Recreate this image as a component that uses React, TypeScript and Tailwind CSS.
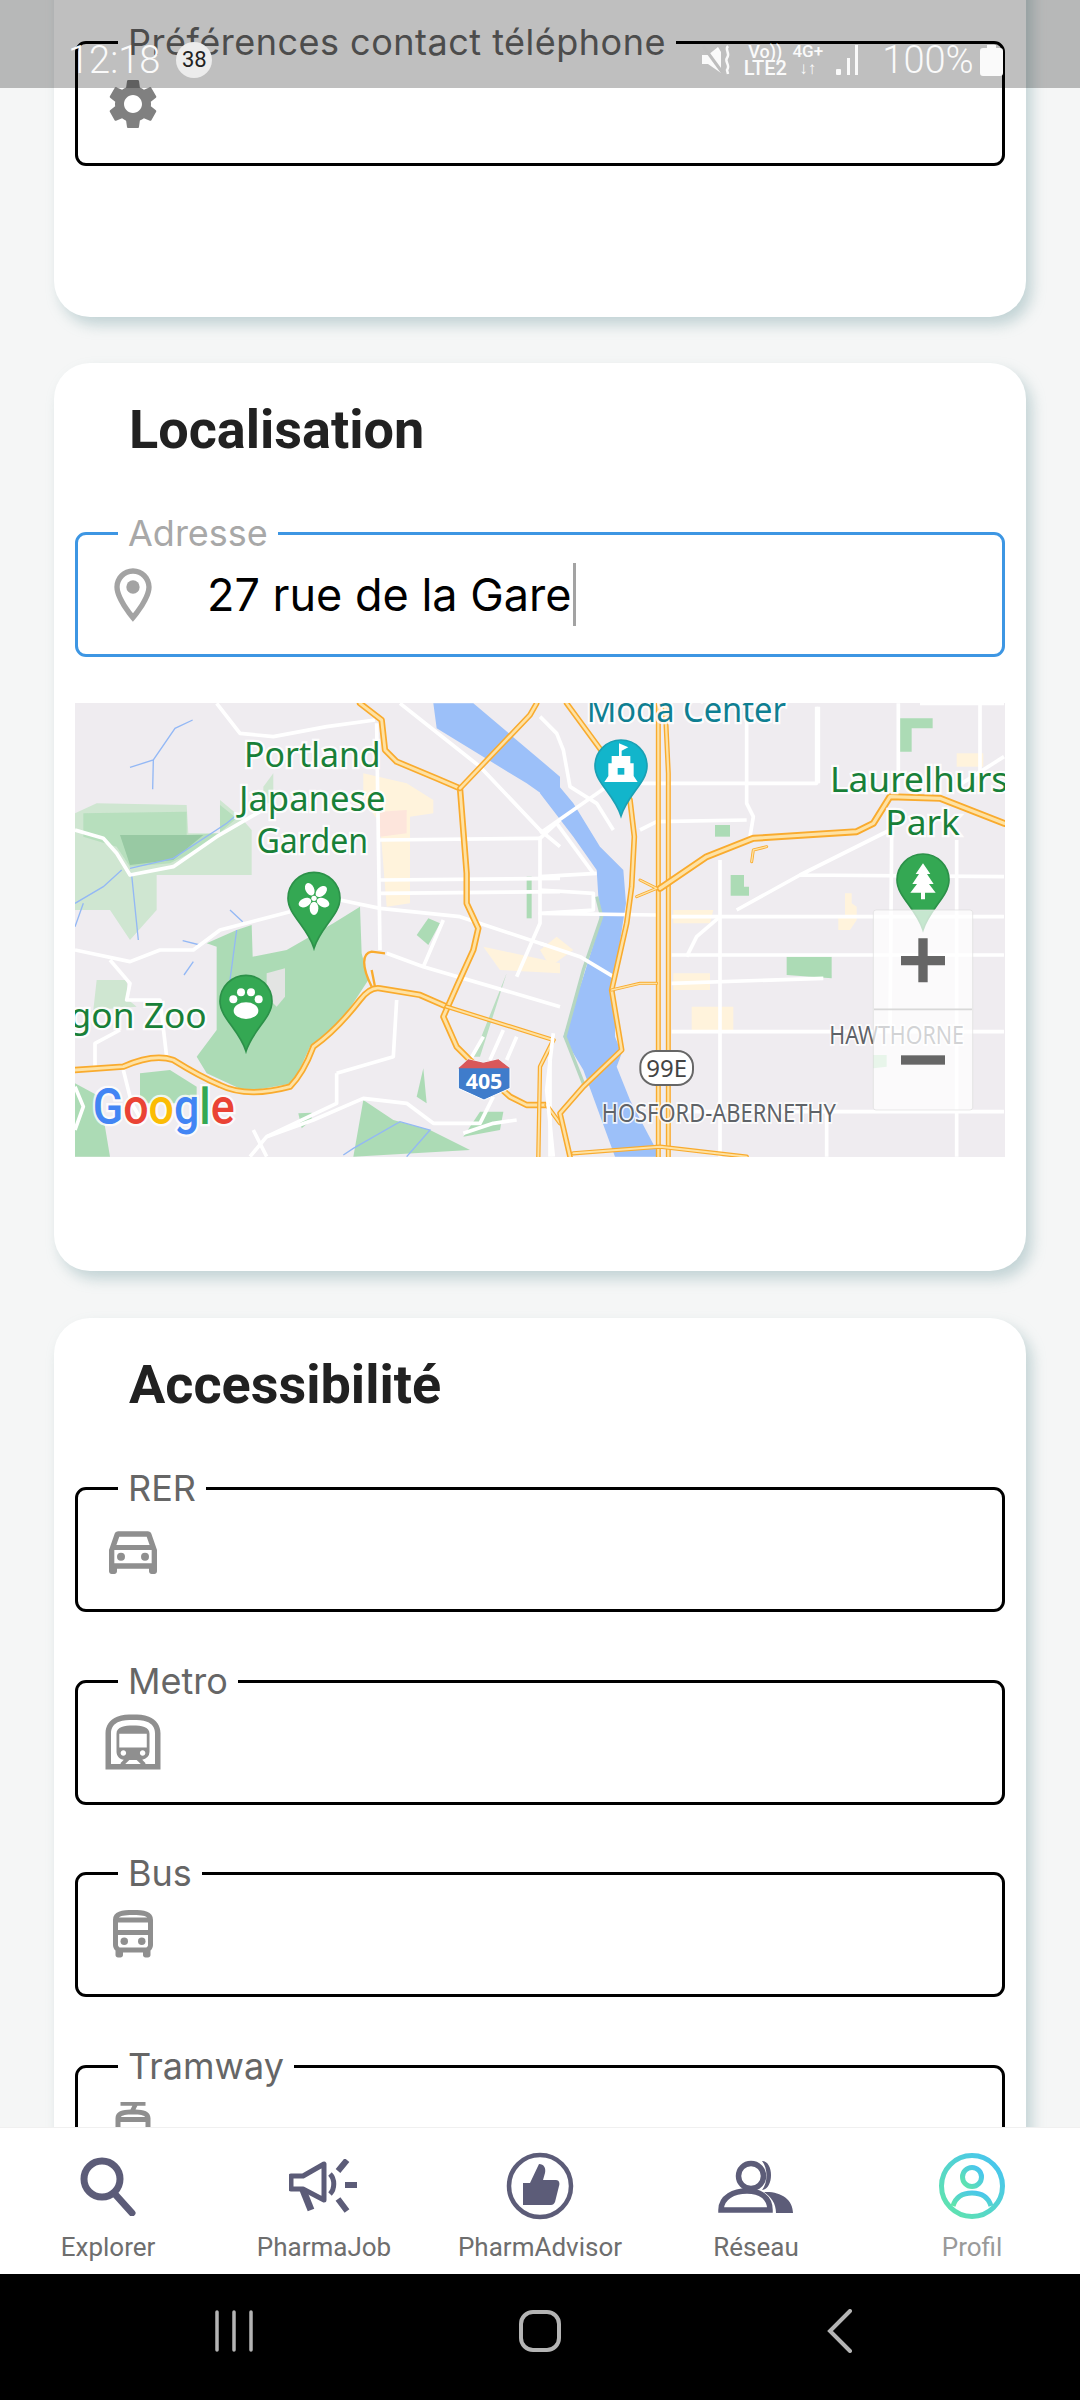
import React from "react";
import {
  MdSettings,
  MdOutlineLocationOn,
  MdOutlineDirectionsCar,
  MdOutlineSubway,
  MdOutlineDirectionsBus,
  MdOutlineTram,
} from "react-icons/md";

const NOTO = '"Noto Sans", sans-serif';

function Pin({ x, y, fill, edge, children }: { x: number; y: number; fill: string; edge: string; children?: React.ReactNode }) {
  return (
    <g transform={`translate(${x},${y})`}>
      <path d="M-78 0A78 78 0 1 1 78 0C78 50 20 85 0 150C-20 85 -78 50 -78 0Z" fill={fill} stroke={edge} strokeWidth="5" />
      {children}
    </g>
  );
}

function MapLabel({ x, y, size, fill, anchor = "middle", len, children }: { x: number; y: number; size: number; fill: string; anchor?: "middle" | "start" | "end"; len?: number; children: React.ReactNode }) {
  return (
    <text x={x} y={y} fontSize={size} fill={fill} textAnchor={anchor} fontFamily={NOTO} stroke="#ffffff" strokeOpacity="0.85" strokeWidth={size * 0.13} paintOrder="stroke" textLength={len} lengthAdjust={len ? "spacingAndGlyphs" : undefined}>
      {children}
    </text>
  );
}

function Highway({ d, w = 17 }: { d: string; w?: number }) {
  return (
    <g fill="none" strokeLinejoin="round" strokeLinecap="round">
      <path d={d} stroke="#f9ab2e" strokeWidth={w} />
      <path d={d} stroke="#fee2a4" strokeWidth={w * 0.45} />
    </g>
  );
}

function MapDrawing() {
  const lg = "#cfe6d1";
  const mg = "#acdbb5";
  const roads3 = [
    "M45 420L130 445L170 490L210 555L340 530L470 440L600 365",
    "M470 40L540 130L640 140L800 110L945 90",
    "M45 780L210 815L300 780L400 780L480 720L690 665",
    "M840 630L960 655L1200 680L1500 780",
    "M950 100L960 780",
    "M960 450L1440 445M960 570L1500 565M960 610L1500 605",
    "M980 790L1090 830L1500 950",
    "M1150 690L1090 830M1440 440L1440 700L1370 860",
    "M150 810L210 880L200 930L300 930L320 1100",
    "M105 1130L105 1060L180 1020",
    "M45 1190L70 1250L45 1320",
    "M830 1150L1000 1100L1010 930M830 1150L830 1240L620 1340L570 1400",
    "M620 1340L760 1290L910 1225L1040 1240L1120 1300L1260 1300L1300 1220",
    "M1210 1330L1300 1300L1370 1290",
    "M1020 40L1260 230L1440 420L1500 470",
    "M1440 445L1500 390",
    "M190 1140L215 1240L250 1300M580 1320L620 1400",
    "M1270 1040L1230 1110M1330 1020L1290 1110M1370 1040L1340 1110",
    "M1470 1100L1470 1400",
  ];
  const roads4 = [
    "M0 80L50 130L70 180L90 290L170 340L220 420",
    "M0 430L100 360L200 290",
    "M50 400L160 550M0 560L170 550",
    "M0 600L160 610L160 660L0 670L350 675",
    "M0 760L120 800L220 860",
    "M300 420L350 395L620 390",
    "M300 280L830 280L830 50",
    "M620 50L620 340L640 380L630 440",
    "M540 510L540 1400",
    "M395 680L1392 680M395 795L1392 795M395 880L850 865M395 1025L1392 1025M395 1265L1392 1265",
    "M835 50L835 280M1075 40L1075 300M1320 40L1320 300",
    "M590 660L780 555L1050 420M780 555L1392 560",
    "M1055 440L1050 1020M1250 450L1250 1400",
    "M860 1265L860 1400M1140 40L1392 40",
    "M1250 290L1392 200",
    "M440 800L470 740L540 680",
    "M40 1030L20 1200L40 1400",
  ];
  return (
    <svg viewBox="0 0 930 454" className="block h-[454px] w-[930px]">
      <rect width="930" height="454" fill="#efecf0" />
      {/* left half: drawn in the coordinates of the left crop */}
      <g transform="translate(-15,-13) scale(0.33333)">
        <path d="M45 370L110 340L380 345L385 430L480 430L480 330L540 380L575 420L575 555L290 555L290 660L210 750L150 660L45 660Z" fill={lg} />
        <path d="M70 370L380 365L380 435L480 430L480 345L530 385L430 470L330 520L210 530L170 470L70 440Z" fill={mg} opacity="0.7" />
        <path d="M180 435L430 435L340 510L210 525Z" fill="#98c9a3" />
        <path d="M610 290L640 250L640 290L640 340L610 340Z" fill={lg} />
        <path d="M110 870L200 870L205 930L230 950L100 960Z" fill={lg} />
        <path d="M470 770L440 760L530 720L575 705L578 800L680 780L820 700L900 650L905 790L925 870L840 1000L750 1070L700 1180L560 1205L440 1150L410 1100L470 1020Z" fill={mg} />
        <path d="M620 850L675 835L675 920L650 950L620 920Z" fill="#e3e4e3" />
        <path d="M240 1150L330 1140L410 1190L410 1240L240 1240Z" fill={mg} />
        <path d="M45 1180L120 1220L150 1400L45 1400Z" fill={mg} />
        <path d="M910 1230L1000 1290L1110 1320L1230 1380L880 1400Z" fill={mg} />
        <path d="M1070 1220L1090 1135L1100 1240Z" fill={mg} />
        <path d="M715 1270L755 1268L755 1290L725 1315Z" fill={mg} />
        <path d="M1260 1265L1330 1265L1320 1320L1210 1340Z" fill={mg} />
        <path d="M1070 735L1105 685L1140 700L1105 765Z" fill={mg} />
        <path d="M1400 560H1415V685H1400Z" fill={mg} />
        <path d="M1240 1100L1320 900L1340 850L1260 1100Z" fill={mg} opacity="0.8" />
        <path d="M910 250L1040 280L1120 330L1120 370L1050 380L1050 640L980 650L960 400L910 330Z" fill="#fff3dc" />
        <path d="M960 365L1040 360L1040 430L960 440Z" fill="#fde5dc" />
        <path d="M1270 770L1500 820L1500 850L1320 840Z" fill="#fff3dc" />
        <path d="M1120 40L1240 40L1500 260L1500 350L1400 280L1130 115Z" fill="#9cc0f9" />
        <path d="M210 232L280 210L345 115L398 90M280 210L278 298M45 640L130 590L185 540M215 555L235 750M210 535L340 505L500 400L530 375M45 710L70 640M510 660L548 695M530 720L510 870M368 752L420 765M400 815L372 855" fill="none" stroke="#93b8f5" strokeWidth="4" />
        <path d="M850 1395L880 1375L1020 1295L1110 1320L1040 1400" fill="none" stroke="#93b8f5" strokeWidth="4" />
        <g fill="none" stroke="#ffffff" strokeWidth="11" strokeLinejoin="round">
          {roads3.map((d) => (
            <path key={d} d={d} />
          ))}
        </g>
        <Highway d="M45 1140L190 1130Q280 1090 340 1110Q420 1160 480 1185Q560 1225 690 1190Q730 1150 760 1070Q830 1020 900 930Q930 890 960 895L1080 915L1160 950" w={19} />
        <Highway d="M900 40L965 90L975 180L1010 215L1130 265L1200 295L1220 550L1220 640L1255 715L1240 780L1190 890L1150 980L1190 1070L1250 1130L1350 1220L1400 1245L1460 1245" w={19} />
        <Highway d="M1200 295L1410 75L1430 40" w={17} />
        <Highway d="M1160 950L1480 1050" w={13} />
        <Highway d="M1480 1050L1440 1130L1435 1400M1460 1245L1500 1300" w={13} />
        <path d="M935 890C905 830 905 790 935 785L975 790M935 840L945 890" fill="none" stroke="#f9ab2e" strokeWidth="7" />
        <path d="M1195 1135L1225 1108L1270 1118L1315 1108L1350 1135V1195L1272 1230L1195 1195Z" fill="#3f7ccb" stroke="#ffffff" strokeWidth="3" />
        <path d="M1195 1135L1225 1108L1270 1118L1315 1108L1350 1135Z" fill="#d9585a" />
        <text x="1272" y="1198" fontSize="64" fontWeight="700" fill="#ffffff" textAnchor="middle" fontFamily={NOTO}>405</text>
        <MapLabel x={757} y={232} size={106} fill="#188038" len={410}>Portland</MapLabel>
        <MapLabel x={757} y={362} size={106} fill="#188038" len={440}>Japanese</MapLabel>
        <MapLabel x={757} y={488} size={106} fill="#188038" len={335}>Garden</MapLabel>
        <MapLabel x={440} y={1015} size={106} fill="#188038" anchor="end">Oregon Zoo</MapLabel>
        <Pin x={762} y={625} fill="#34a853" edge="#2c9149">
          <circle r="8" fill="#ffffff" />
          <ellipse cx="0" cy="-30" rx="13" ry="20" fill="#ffffff" transform="rotate(-25)" />
          <ellipse cx="0" cy="-30" rx="13" ry="20" fill="#ffffff" transform="rotate(47)" />
          <ellipse cx="0" cy="-30" rx="13" ry="20" fill="#ffffff" transform="rotate(115)" />
          <ellipse cx="0" cy="-30" rx="13" ry="20" fill="#ffffff" transform="rotate(180)" />
          <ellipse cx="0" cy="-30" rx="13" ry="20" fill="#ffffff" transform="rotate(245)" />
        </Pin>
        <Pin x={558} y={934} fill="#34a853" edge="#2c9149">
          <ellipse cx="0" cy="28" rx="37" ry="25" fill="#ffffff" />
          <circle cx="-15" cy="-27" r="12" fill="#ffffff" />
          <circle cx="15" cy="-27" r="12" fill="#ffffff" />
          <circle cx="-38" cy="-6" r="12" fill="#ffffff" />
          <circle cx="38" cy="-6" r="12" fill="#ffffff" />
        </Pin>
        <g>
          <text y="1302" fontSize="150" fontWeight="500" fontFamily='"Roboto", sans-serif' stroke="#ffffff" strokeOpacity="0.8" strokeWidth="14" paintOrder="stroke" x="98" textLength="426" lengthAdjust="spacingAndGlyphs">
            <tspan fill="#4285f4">G</tspan>
            <tspan fill="#ea4335">o</tspan>
            <tspan fill="#fbbc05">o</tspan>
            <tspan fill="#4285f4">g</tspan>
            <tspan fill="#34a853">l</tspan>
            <tspan fill="#ea4335">e</tspan>
          </text>
        </g>
      </g>
      {/* right half: drawn in the coordinates of the right crop */}
      <g transform="translate(465,-13) scale(0.33333)">
        <path d="M1078 85H1178V115H1115V185H1078Z" fill={mg} />
        <path d="M525 405H570V440H525Z" fill={mg} />
        <path d="M572 555H612V590H627V617H572Z" fill={mg} />
        <path d="M740 800H875V865L740 855Z" fill={mg} />
        <path d="M1000 1095H1040V1130L1000 1135Z" fill={mg} />
        <path d="M895 680L915 680L915 610L935 610L935 640L950 650V690L930 720H895Z" fill="#fff3dc" />
        <path d="M1250 190H1330V230H1250Z" fill="#fff3dc" />
        <path d="M400 660H520L510 700H400ZM0 780L50 740L100 780L30 830ZM400 850H510V900H400ZM455 950H580V1020H455Z" fill="#fff3dc" />
        <path d="M0 220L100 340L180 470L250 540L258 640L225 850L225 1040L245 1090L230 1130L270 1230L360 1400L225 1400L130 1140L70 1040L130 860L180 700L170 540L100 440L0 310Z" fill="#9cc0f9" />
        <path d="M170 620L185 680L130 840L75 1040L130 1180" fill="none" stroke="#b5d6c0" strokeWidth="10" />
        <g fill="none" stroke="#ffffff" strokeWidth="11" strokeLinejoin="round">
          {roads4.map((d) => (
            <path key={d} d={d} />
          ))}
        </g>
        <Highway d="M80 40L190 190L270 330L283 440L275 590L260 700L215 900L245 1080L130 1190L60 1270L90 1400" w={17} />
        <Highway d="M355 40L355 1400" w={15} />
        <Highway d="M375 40L385 250L385 1400" w={15} />
        <Highway d="M360 595L500 500L640 445L950 425L1000 400L1050 320L1200 325L1392 400" w={21} />
        <Highway d="M100 1390L360 1370L620 1400" w={13} />
        <Highway d="M300 570L350 595L290 620M215 900L300 880L350 880" w={9} />
        <Highway d="M680 470L640 480L635 515" w={9} />
        <MapLabel x={140} y={95} size={106} fill="#0f7f92" anchor="start" len={598}>Moda Center</MapLabel>
        <MapLabel x={870} y={305} size={106} fill="#188038" anchor="start">Laurelhurst</MapLabel>
        <MapLabel x={1148} y={435} size={106} fill="#188038">Park</MapLabel>
        <MapLabel x={868} y={1062} size={76} fill="#5f6368" anchor="start" len={404}>HAWTHORNE</MapLabel>
        <MapLabel x={185} y={1295} size={76} fill="#5f6368" anchor="start" len={703}>HOSFORD-ABERNETHY</MapLabel>
        <rect x="301" y="1083" width="158" height="102" rx="46" fill="#ffffff" stroke="#666666" strokeWidth="6" />
        <text x="380" y="1160" fontSize="72" fill="#444444" textAnchor="middle" fontFamily={NOTO}>99E</text>
        <Pin x={243} y={228} fill="#12b5cb" edge="#1aa0b4">
          <path d="M-50 48L-38 30V-8H-28V-30H-6V-68L22 -56L2 -46V-30H28V-8H38V30L50 48Z" fill="#ffffff" />
          <rect x="-10" y="6" width="20" height="20" fill="#12b5cb" />
        </Pin>
        <Pin x={1149} y={570} fill="#34a853" edge="#2c9149">
          <path d="M0 -50L22 -18H12L32 12H18L38 38H6V58H-6V38H-38L-18 12H-32L-12 -18H-22Z" fill="#ffffff" />
        </Pin>
        <rect x="1000" y="660" width="298" height="600" rx="8" fill="#ffffff" fillOpacity="0.72" stroke="#dddddd" strokeWidth="2" />
        <path d="M1002 958H1296" stroke="#d8d8d8" strokeWidth="5" />
        <path d="M1135 745H1163V798H1215V826H1163V877H1135V826H1083V798H1135Z" fill="#666666" />
        <rect x="1083" y="1096" width="132" height="28" fill="#666666" />
      </g>
    </svg>
  );
}

type FieldProps = {
  label: string;
  icon: React.ReactNode;
  labelClass: string;
  focused?: boolean;
  children?: React.ReactNode;
};

function Field({ label, icon, labelClass, focused, children }: FieldProps) {
  return (
    <div className={`relative flex h-[125px] w-[930px] items-center rounded-[11px] border-[3px] pl-[19px] ${focused ? "border-[#3d96e3]" : "border-black"}`}>
      <span className={`absolute left-[40px] top-[-24px] whitespace-nowrap bg-white px-[10px] text-[36px] leading-[44px] [font-family:Inter,sans-serif] ${labelClass}`}>
        {label}
      </span>
      <span className="flex h-[72px] w-[72px] shrink-0 items-center justify-center">{icon}</span>
      {children}
    </div>
  );
}

function Heading({ children }: { children: React.ReactNode }) {
  return (
    <h2 className="h-[169px] pl-[54px] pt-[34px] text-[54px] font-bold leading-[66px] text-[#212121] [font-family:Roboto,sans-serif]">
      {children}
    </h2>
  );
}

const navLabel = "mt-[9px] text-[26px] leading-[32px] [font-family:Roboto,sans-serif]";

function NavItem({ label, icon, muted }: { label: string; icon: React.ReactNode; muted?: boolean }) {
  return (
    <div className="flex flex-col items-center pt-[22px]">
      <div className="flex h-[72px] items-center justify-center">{icon}</div>
      <span className={`${navLabel} ${muted ? "text-[#9a9a9a]" : "text-[#6e6e6e]"}`}>{label}</span>
    </div>
  );
}

const NAVC = "#5c5c78";

export default function App() {
  return (
    <div className="relative flex h-[2400px] w-[1080px] flex-col overflow-hidden bg-[#f5f6f6]">
      <main className="min-h-0 flex-1 overflow-hidden">
        <section className="mx-[54px] mt-[-60px] h-[377px] rounded-[36px] bg-white px-[21px] pt-[101px] shadow-[6px_8px_14px_rgba(120,160,165,0.4)]">
          <Field label="Préférences contact téléphone" labelClass="text-[#666666] tracking-[0.5px]" icon={<MdSettings size={60} color="#808080" />} />
        </section>

        <section className="mx-[54px] mt-[46px] h-[908px] rounded-[36px] bg-white px-[21px] shadow-[6px_8px_14px_rgba(120,160,165,0.4)]">
          <Heading>Localisation</Heading>
          <Field label="Adresse" labelClass="text-[#a8a8a8]" focused icon={<MdOutlineLocationOn size={64} color="#a3a3a3" />}>
            <span className="ml-[38px] text-[45px] leading-[60px] text-black [font-family:Inter,sans-serif]">27 rue de la Gare</span>
            <span className="ml-[1px] h-[63px] w-[3px] bg-[#a3a3a3]" />
          </Field>
          <div className="mt-[46px]">
            <MapDrawing />
          </div>
        </section>

        <section className="mx-[54px] mt-[47px] rounded-[36px] bg-white px-[21px] pb-[60px] shadow-[6px_8px_14px_rgba(120,160,165,0.4)]">
          <Heading>Accessibilité</Heading>
          <div className="flex flex-col gap-[67.5px]">
            <Field label="RER" labelClass="text-[#666666]" icon={<MdOutlineDirectionsCar size={64} color="#8f8f8f" />} />
            <Field label="Metro" labelClass="text-[#666666]" icon={<MdOutlineSubway size={66} color="#8f8f8f" />} />
            <Field label="Bus" labelClass="text-[#666666]" icon={<MdOutlineDirectionsBus size={60} color="#8f8f8f" />} />
            <Field label="Tramway" labelClass="text-[#666666]" icon={<MdOutlineTram size={60} color="#8f8f8f" />} />
          </div>
        </section>
      </main>

      <nav className="grid h-[147px] shrink-0 grid-cols-5 border-t border-[#f0f0f0] bg-white">
        <NavItem
          label="Explorer"
          icon={
            <svg width="58" height="60" viewBox="0 0 58 60" fill="none" stroke={NAVC} strokeWidth="7">
              <circle cx="23" cy="23" r="18" />
              <path d="M35 37L53 57" strokeLinecap="round" />
            </svg>
          }
        />
        <NavItem
          label="PharmaJob"
          icon={
            <svg width="70" height="54" viewBox="0 0 70 54" fill="none" stroke={NAVC} strokeWidth="5">
              <path d="M2 17H14L35 5V41L14 30H2Z" strokeLinejoin="round" />
              <path d="M14 31L22 51" strokeWidth="7" />
              <path d="M41 15C46 20 46 30 41 35" />
              <path d="M49 12L58 1M56 26H68M49 40L58 52" strokeWidth="6" />
            </svg>
          }
        />
        <NavItem
          label="PharmAdvisor"
          icon={
            <svg width="68" height="68" viewBox="0 0 68 68">
              <circle cx="34" cy="34" r="31" fill="none" stroke={NAVC} strokeWidth="4.5" />
              <path d="M17 31H24L33 12C38 12 40 16 39 21L37 28H50C53 28 54 31 53 34L49 50C48 52 47 53 45 53H17Z" fill={NAVC} />
            </svg>
          }
        />
        <NavItem
          label="Réseau"
          icon={
            <svg width="76" height="54" viewBox="0 0 76 54">
              <circle cx="33" cy="17" r="12.5" fill="none" stroke={NAVC} strokeWidth="5.5" />
              <path d="M44 2C56 2 56 30 44 31C50 24 50 9 44 2Z" fill={NAVC} />
              <path d="M3 51C3 38 16 32 29 32C42 32 52 38 52 51Z" fill="none" stroke={NAVC} strokeWidth="5.5" />
              <path d="M46 33C62 32 75 40 75 54H58C58 44 53 38 46 33Z" fill={NAVC} />
            </svg>
          }
        />
        <NavItem
          muted
          label="Profil"
          icon={
            <svg width="68" height="68" viewBox="0 0 68 68" fill="none">
              <defs>
                <linearGradient id="profilGrad" x1="0" y1="1" x2="1" y2="0">
                  <stop offset="0" stopColor="#62e6a8" />
                  <stop offset="1" stopColor="#45c2f5" />
                </linearGradient>
              </defs>
              <circle cx="34" cy="34" r="30.5" stroke="url(#profilGrad)" strokeWidth="5" />
              <circle cx="34" cy="25" r="9.5" stroke="url(#profilGrad)" strokeWidth="5" />
              <path d="M15 54C18 44 26 41 34 41C42 41 50 44 53 54" stroke="url(#profilGrad)" strokeWidth="5" />
            </svg>
          }
        />
      </nav>

      <footer className="relative flex h-[126px] shrink-0 items-center justify-between bg-black pb-[12px] pl-[215px] pr-[227px]">
        <svg width="38" height="42" viewBox="0 0 38 42" stroke="#b4b4b4" strokeWidth="3.5" strokeLinecap="round">
          <path d="M2 2V40M19 2V40M36 2V40" />
        </svg>
        <svg width="42" height="42" viewBox="0 0 42 42" fill="none" stroke="#b4b4b4" strokeWidth="4">
          <rect x="2" y="2" width="38" height="38" rx="12" />
        </svg>
        <svg width="26" height="44" viewBox="0 0 26 44" fill="none" stroke="#b4b4b4" strokeWidth="4" strokeLinecap="round">
          <path d="M23 2L3 22L23 42" />
        </svg>
      </footer>

      <header className="absolute left-0 right-0 top-0 flex h-[88px] items-center bg-black/25 pl-[68px] pt-[32px] text-[#fafafa] [font-family:Roboto,sans-serif]">
        <span className="text-[38px] font-light leading-[46px]">12:18</span>
        <span className="ml-[16px] flex h-[36px] w-[36px] items-center justify-center rounded-full bg-[#ececec] text-[22px] leading-[26px] text-[#222222]">38</span>
        <div className="ml-[490px] flex items-center">
          <svg width="30" height="32" viewBox="0 0 30 32" fill="#fafafa">
            <path d="M0 11H6L16 3L19 8L19 29L6 20H0Z" />
            <path d="M1 2L20 28" stroke="#bdbdbd" strokeWidth="3" />
            <path d="M26 2C22 6 29 9 25 14C22 18 29 21 25 26L26 30" fill="none" stroke="#fafafa" strokeWidth="2.5" />
          </svg>
          <div className="ml-[13px] flex w-[40px] flex-col items-center text-[20px] font-medium leading-[17px]">
            <span className="text-[18px]">Vo))</span>
            <span>LTE2</span>
          </div>
          <div className="ml-[7px] flex w-[31px] flex-col items-center text-[17px] font-medium leading-[17px]">
            <span>4G+</span>
            <span className="text-[17px]">↓↑</span>
          </div>
          <svg className="ml-[13px]" width="28" height="30" viewBox="0 0 28 30" fill="#fafafa">
            <rect x="0" y="24" width="5" height="6" rx="1" />
            <rect x="11" y="13" width="3" height="17" />
            <rect x="19" y="0" width="3" height="30" />
          </svg>
          <span className="ml-[18px] text-[38px] font-light leading-[46px]">100%</span>
          <svg className="ml-[6px]" width="23" height="31" viewBox="0 0 23 31" fill="#fafafa">
            <path d="M7 0H16V3H20C22 3 23 4 23 6V28C23 30 22 31 20 31H3C1 31 0 30 0 28V6C0 4 1 3 3 3H7Z" />
          </svg>
        </div>
      </header>
    </div>
  );
}
